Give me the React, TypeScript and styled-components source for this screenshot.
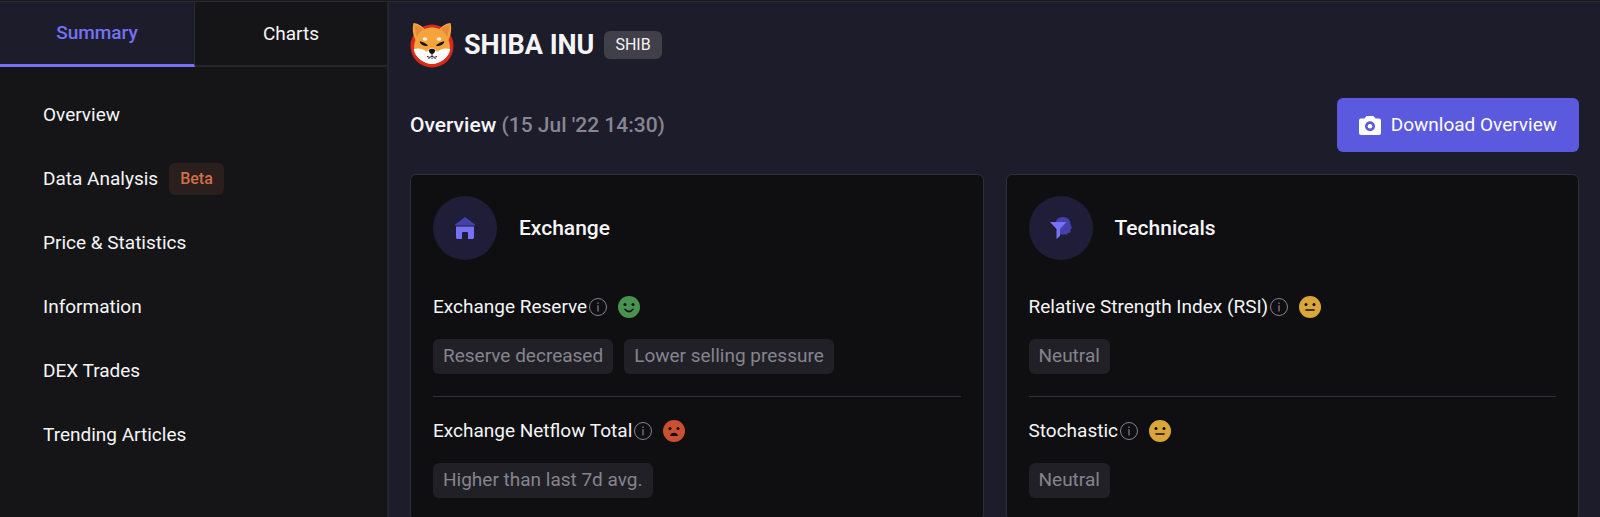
import React from "react";
import styled, { createGlobalStyle } from "styled-components";

const GlobalStyle = createGlobalStyle`
  * { box-sizing: border-box; }
  body {
    margin: 0;
    background: #1d1c2b;
    color: #f5f5f7;
    font: 400 19px/24px Roboto, "Liberation Sans", sans-serif;
  }
  ul, h1, h2, h3, h4 { margin: 0; padding: 0; }
  ul { list-style: none; }
  button { font: inherit; color: inherit; border: 0; cursor: pointer; }
`;

const Page = styled.div`
  display: grid;
  grid-template-columns: 389px minmax(0, 1fr);
  min-height: 100vh;
  border-top: 1px solid #1a191e;
`;

const Sidebar = styled.aside`
  background: #151517;
  border-top: 1px solid #2c2c30;
  border-right: 2px solid #25252c;
`;

const Tabs = styled.div`
  display: grid;
  grid-template-columns: 195px 1fr;
`;

const Tab = styled.button<{ $active?: boolean }>`
  height: 65px;
  padding: 0;
  background: ${(p) => (p.$active ? "#1d1c2b" : "transparent")};
  color: ${(p) => (p.$active ? "#7572f5" : "#f5f5f7")};
  font-weight: ${(p) => (p.$active ? 500 : 400)};
  border-bottom: ${(p) => (p.$active ? "3px solid #7572f5" : "2px solid #25252c")};
  border-right: ${(p) => (p.$active ? "1px solid #2a2a31" : "0")};
`;

const NavList = styled.ul`
  padding-top: 16px;
`;

const NavLink = styled.a`
  display: flex;
  align-items: center;
  gap: 11px;
  height: 64px;
  padding: 0 43px;
  color: inherit;
  text-decoration: none;
`;

const BetaBadge = styled.span`
  padding: 4px 11px;
  border-radius: 6px;
  background: #2a1f1d;
  color: #d26f45;
  font-size: 16px;
  font-weight: 500;
`;

const Main = styled.main`
  padding: 20px 21px 0;
  border-top: 1px solid #2c2c30;
`;

const TokenHeader = styled.header`
  display: flex;
  align-items: center;
  gap: 10px;
`;

const TokenName = styled.h1`
  font-size: 27px;
  line-height: 32px;
  font-weight: 700;
`;

const SymbolBadge = styled.span`
  padding: 2px 11px;
  border-radius: 6px;
  background: #413f4a;
  font-size: 16px;
`;

const OverviewBar = styled.div`
  display: flex;
  align-items: center;
  justify-content: space-between;
  margin: 30px 0 22px;
`;

const SectionTitle = styled.h2`
  font-size: 21px;
  font-weight: 500;
`;

const Timestamp = styled.span`
  color: #878692;
`;

const DownloadButton = styled.button`
  display: flex;
  align-items: center;
  gap: 10px;
  height: 54px;
  padding: 0 22px;
  border-radius: 6px;
  background: #5b59de;
  color: #fff;
`;

const CardGrid = styled.div`
  display: grid;
  grid-template-columns: 1fr 1fr;
  gap: 22px;
`;

const Card = styled.section`
  padding: 21px 22px;
  background: #0f0f11;
  border: 1px solid #2f2f37;
  border-radius: 6px;
`;

const CardHeader = styled.header`
  display: flex;
  align-items: center;
  gap: 22px;
  margin-bottom: 35px;
`;

const IconDisc = styled.span`
  display: grid;
  place-items: center;
  width: 64px;
  height: 64px;
  border-radius: 50%;
  background: #1f1d38;
`;

const CardTitle = styled.h3`
  font-size: 21px;
  font-weight: 500;
`;

const Metric = styled.div`
  & + & {
    margin-top: 22px;
    padding-top: 22px;
    border-top: 1px solid #303036;
  }
`;

const MetricHeading = styled.div`
  display: flex;
  align-items: center;
  margin-bottom: 20px;
`;

const MetricName = styled.h4`
  font-size: 19px;
  font-weight: 400;
`;

const InfoButton = styled.button`
  display: flex;
  margin: 0 11px 0 2px;
  padding: 0;
  background: none;
`;

const Tags = styled.div`
  display: flex;
  gap: 11px;
`;

const Tag = styled.span`
  padding: 5px 10px 6px;
  border-radius: 6px;
  background: #212026;
  color: #85848f;
`;

const ShibaLogo = () => (
  <svg width="44" height="46" viewBox="0 0 44 46" aria-hidden="true">
    <circle cx="22" cy="24" r="21.5" fill="#d92b1c" />
    <path d="M3.500 1C7 1 12 4 14.500 7C19 5 25 5 29.500 7C32 4 37 1 40.500 1C42 7 41 13 38.500 18C40 22 40.500 26 39.500 29C37 37 29 42 22 42C15 42 7 37 4.500 29C3.500 26 4 22 5.500 18C3 13 2 7 3.500 1Z" fill="#f4a43b" />
    <path d="M4.500 3C5 8 5.500 12 7 15C8.500 12 11 9 13.500 8C11 5.500 8 3.500 4.500 3ZM39.500 3C39 8 38.500 12 37 15C35.500 12 33 9 30.500 8C33 5.500 36 3.500 39.500 3Z" fill="#e98a36" />
    <path d="M3.800 27C9 25.500 14 27 17 30C18.500 27 20 26 22 26C24 26 25.500 27 27 30C30 27 35 25.500 40.200 27C39.500 35 30 42 22 42C14 42 4.500 35 3.800 27Z" fill="#fff" />
    <ellipse cx="15" cy="17" rx="2.400" ry="1.800" fill="#fff3df" />
    <ellipse cx="29" cy="17" rx="2.400" ry="1.800" fill="#fff3df" />
    <path d="M9.500 19.500C12 19.500 17 21.500 18 24C15 24.500 11 23.500 9.500 19.500ZM34.500 19.500C32 19.500 27 21.500 26 24C29 24.500 33 23.500 34.500 19.500Z" fill="#141414" />
    <path d="M18.800 28.500C19 26 25 26 25.200 28.500C25 31 23 32 22 32C21 32 19 31 18.800 28.500Z" fill="#111" />
    <path d="M22 31V35M17 34.500Q19.500 36 22 34.500Q24.500 36 27 34.500M19 35.500V37M22 35.500V37M25 35.500V37" stroke="#222" strokeWidth="1" fill="none" />
  </svg>
);

const CameraIcon = () => (
  <svg width="22" height="19" viewBox="0 0 22 19" aria-hidden="true">
    <path fillRule="evenodd" fill="#fff" d="M7.500 0H14.500L16.500 2.500H20Q22 2.500 22 4.500V17Q22 19 20 19H2Q0 19 0 17V4.500Q0 2.500 2 2.500H5.500ZM11 5.200A5 5 0 1 0 11 15.200A5 5 0 1 0 11 5.200Z" />
    <circle cx="11" cy="10.200" r="2.300" fill="#fff" />
  </svg>
);

const HouseIcon = () => (
  <svg width="22" height="22" viewBox="0 0 22 22" aria-hidden="true">
    <path d="M11 0L21 7.500V8.500H1V7.500Z" fill="#4640ab" />
    <path d="M2 9.500H20V20.500Q20 22 18.500 22H14V16Q14 15 13 15H9Q8 15 8 16V22H3.500Q2 22 2 20.500Z" fill="#7572f5" />
  </svg>
);

const FunnelIcon = () => (
  <svg width="22" height="22" viewBox="0 0 22 22" aria-hidden="true">
    <path d="M6 4C7 1.500 10 0 13 0C17.500 0 20.500 3 20.500 7L22 11L20.500 12V14.500Q20.500 16 18.500 16H17.500V17.500H9Z" fill="#4640ab" />
    <path d="M0 5H16.500L10 12V19L6.500 22V12Z" fill="#7572f5" />
  </svg>
);

const InfoIcon = () => (
  <svg width="18" height="18" viewBox="0 0 18 18" fill="none" stroke="#85848c" aria-hidden="true">
    <circle cx="9" cy="9" r="8.500" />
    <path d="M9 7.200V13.500M9 4.500V6" strokeWidth="1.200" />
  </svg>
);

type Mood = "positive" | "neutral" | "negative";

const moodColor: Record<Mood, string> = {
  positive: "#489350",
  neutral: "#dba639",
  negative: "#cb5032",
};

const MoodIcon = ({ mood }: { mood: Mood }) => (
  <svg width="22" height="22" viewBox="0 0 22 22" role="img" aria-label={mood}>
    <circle cx="11" cy="11" r="11" fill={moodColor[mood]} />
    <circle cx="7" cy="8.500" r="1.500" fill="#0f0f11" />
    <circle cx="15" cy="8.500" r="1.500" fill="#0f0f11" />
    {mood === "positive" && (
      <path d="M7 13.300Q11 18 15 13.300" stroke="#0f0f11" strokeWidth="1.600" strokeLinecap="round" fill="none" />
    )}
    {mood === "neutral" && (
      <path d="M7 14H15" stroke="#0f0f11" strokeWidth="1.600" strokeLinecap="round" />
    )}
    {mood === "negative" && (
      <path d="M6.800 16C8 11.500 14 11.500 15.200 16Z" fill="#0f0f11" />
    )}
  </svg>
);

const navItems = [
  { label: "Overview" },
  { label: "Data Analysis", badge: "Beta" },
  { label: "Price & Statistics" },
  { label: "Information" },
  { label: "DEX Trades" },
  { label: "Trending Articles" },
];

const cards: {
  title: string;
  icon: React.ReactNode;
  metrics: { name: string; mood: Mood; tags: string[] }[];
}[] = [
  {
    title: "Exchange",
    icon: <HouseIcon />,
    metrics: [
      { name: "Exchange Reserve", mood: "positive", tags: ["Reserve decreased", "Lower selling pressure"] },
      { name: "Exchange Netflow Total", mood: "negative", tags: ["Higher than last 7d avg."] },
    ],
  },
  {
    title: "Technicals",
    icon: <FunnelIcon />,
    metrics: [
      { name: "Relative Strength Index (RSI)", mood: "neutral", tags: ["Neutral"] },
      { name: "Stochastic", mood: "neutral", tags: ["Neutral"] },
    ],
  },
];

export default function App() {
  return (
    <>
      <GlobalStyle />
      <Page>
        <Sidebar>
          <Tabs role="tablist">
            <Tab role="tab" aria-selected="true" $active>Summary</Tab>
            <Tab role="tab" aria-selected="false">Charts</Tab>
          </Tabs>
          <nav>
            <NavList>
              {navItems.map((item) => (
                <li key={item.label}>
                  <NavLink href="#">
                    {item.label}
                    {item.badge && <BetaBadge>{item.badge}</BetaBadge>}
                  </NavLink>
                </li>
              ))}
            </NavList>
          </nav>
        </Sidebar>
        <Main>
          <TokenHeader>
            <ShibaLogo />
            <TokenName>SHIBA INU</TokenName>
            <SymbolBadge>SHIB</SymbolBadge>
          </TokenHeader>
          <OverviewBar>
            <SectionTitle>
              Overview <Timestamp>(15 Jul '22 14:30)</Timestamp>
            </SectionTitle>
            <DownloadButton>
              <CameraIcon />
              Download Overview
            </DownloadButton>
          </OverviewBar>
          <CardGrid>
            {cards.map((card) => (
              <Card key={card.title}>
                <CardHeader>
                  <IconDisc>{card.icon}</IconDisc>
                  <CardTitle>{card.title}</CardTitle>
                </CardHeader>
                {card.metrics.map((metric) => (
                  <Metric key={metric.name}>
                    <MetricHeading>
                      <MetricName>{metric.name}</MetricName>
                      <InfoButton aria-label={`About ${metric.name}`}>
                        <InfoIcon />
                      </InfoButton>
                      <MoodIcon mood={metric.mood} />
                    </MetricHeading>
                    <Tags>
                      {metric.tags.map((tag) => (
                        <Tag key={tag}>{tag}</Tag>
                      ))}
                    </Tags>
                  </Metric>
                ))}
              </Card>
            ))}
          </CardGrid>
        </Main>
      </Page>
    </>
  );
}
